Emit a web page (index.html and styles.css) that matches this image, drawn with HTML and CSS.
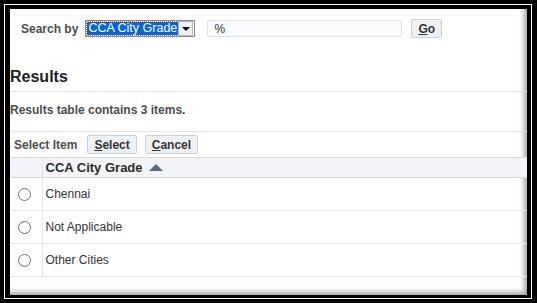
FILE: index.html
```html
<!DOCTYPE html>
<html lang="en">
<head>
    <meta charset="UTF-8">
    <title>Search and Select: CCA City Grade</title>
    <link rel="stylesheet" href="styles.css">
</head>
<body>
    <div class="frame">
        <div class="panel">
            <div class="search-row">
                <span class="label">Search by</span>
                <div class="picker">
                    <span class="picker-value">CCA City Grade</span>
                    <span class="picker-arrow"><span class="arrow-down"></span></span>
                </div>
                <input type="text" class="search-input" value="%">
                <button class="btn"><u>G</u>o</button>
            </div>

            <h2 class="results-title">Results</h2>
            <div class="summary">Results table contains 3 items.</div>

            <div class="toolbar">
                <span class="label">Select Item</span>
                <button class="btn"><u>S</u>elect</button>
                <button class="btn"><u>C</u>ancel</button>
            </div>

            <table class="results">
                <thead>
                    <tr>
                        <th class="col-pick"></th>
                        <th>CCA City Grade <span class="sort-up"></span></th>
                    </tr>
                </thead>
                <tbody>
                    <tr>
                        <td class="col-pick"><span class="radio"></span></td>
                        <td>Chennai</td>
                    </tr>
                    <tr>
                        <td class="col-pick"><span class="radio"></span></td>
                        <td>Not Applicable</td>
                    </tr>
                    <tr>
                        <td class="col-pick"><span class="radio"></span></td>
                        <td>Other Cities</td>
                    </tr>
                </tbody>
            </table>
        </div>
    </div>
</body>
</html>
```

FILE: styles.css
```css
html, body {
    margin: 0;
    height: 100%;
}
body {
    background-color: #000;
    padding: 4px 5px 4px 4px;
    box-sizing: border-box;
    font-family: "Liberation Sans", Arial, sans-serif;
    font-size: 12px;
    color: #333;
}
.frame {
    height: 100%;
    box-sizing: border-box;
    border: 1px solid #fff;
    background-color: #000;
    padding: 4px 4px 3px 5px;
}
.panel {
    height: 100%;
    background-color: #fff;
    box-shadow: inset -5px -5px 5px -2px rgba(0, 0, 0, 0.35);
    overflow: hidden;
}
.search-row {
    display: flex;
    align-items: center;
    height: 19px;
    padding: 10px 0 0 11px;
}
.label {
    font-weight: bold;
    color: #4d4d4d;
}
.picker {
    display: flex;
    align-items: center;
    margin-left: 7px;
    width: 110px;
    height: 17px;
    box-sizing: border-box;
    border: 1px solid #8a8a8a;
    background-color: #fff;
}
.picker-value {
    margin-left: 1px;
    height: 13px;
    line-height: 13px;
    padding: 0 1px;
    background-color: #0a64d8;
    color: #fff;
    font-size: 12.5px;
    outline: 1px dotted #c9782a;
    white-space: nowrap;
}
.picker-arrow {
    margin-left: auto;
    margin-right: 1px;
    width: 14px;
    height: 13px;
    background-color: #f0f0f0;
    border: 1px solid #b8b8b8;
    display: flex;
    align-items: center;
    justify-content: center;
}
.arrow-down {
    width: 0;
    height: 0;
    border-left: 4px solid transparent;
    border-right: 4px solid transparent;
    border-top: 4px solid #000;
}
.search-input {
    margin-left: 12px;
    width: 195px;
    height: 17px;
    box-sizing: border-box;
    border: 1px solid #dfe4e8;
    border-radius: 2px;
    background-color: #f9fbfc;
    padding: 0 6px;
    font-family: inherit;
    font-size: 12px;
    color: #333;
}
.btn {
    margin-left: 9px;
    height: 19px;
    padding: 0 6px;
    border: 1px solid #c9d0d6;
    border-radius: 2px;
    background-color: #eef1f4;
    font-family: inherit;
    font-size: 12px;
    font-weight: bold;
    color: #333;
}
.results-title {
    margin: 29px 0 0;
    padding: 0 0 4px;
    line-height: 20px;
    font-size: 16px;
    font-weight: bold;
    color: #222;
    border-bottom: 1px solid #dfe4e8;
}
.summary {
    height: 39px;
    line-height: 36px;
    font-weight: bold;
    color: #4d4d4d;
    border-bottom: 1px solid #dfe4e8;
}
.toolbar {
    display: flex;
    align-items: center;
    height: 25px;
    padding-left: 4px;
}
.toolbar .btn {
    margin-left: 10px;
}
.toolbar .btn + .btn {
    margin-left: 8px;
}
.results {
    width: 100%;
    border-collapse: collapse;
}
.results th {
    height: 19px;
    background-color: #f2f4f7;
    border-top: 1px solid #d6dbe0;
    border-bottom: 1px solid #d6dbe0;
    text-align: left;
    font-size: 13px;
    font-weight: bold;
    color: #2b2b2b;
    padding: 0 0 0 3px;
}
.results td {
    height: 32px;
    border-bottom: 1px solid #e9e9e9;
    padding: 0 0 0 3px;
    color: #333;
}
.results .col-pick {
    width: 32px;
    padding: 0 0 0 8px;
    box-sizing: border-box;
    border-right: 1px solid #e4e7ea;
    text-align: left;
}
.sort-up {
    display: inline-block;
    width: 0;
    height: 0;
    margin-left: 3px;
    border-left: 7px solid transparent;
    border-right: 7px solid transparent;
    border-bottom: 7px solid #5b6b7c;
    vertical-align: 1px;
}
.radio {
    display: inline-block;
    width: 11px;
    height: 11px;
    border: 1px solid #6e6e6e;
    border-radius: 50%;
    background-color: #fff;
    vertical-align: middle;
}
```
